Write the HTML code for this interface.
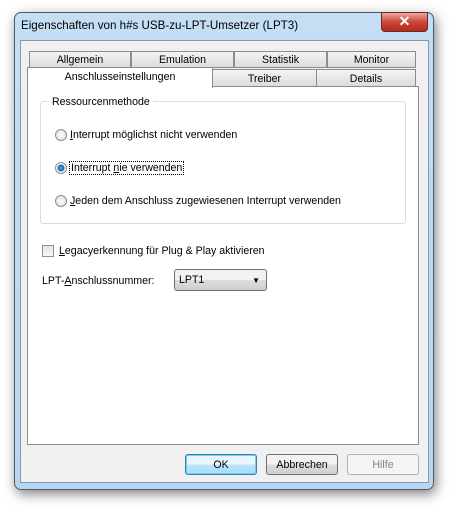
<!DOCTYPE html>
<html><head><style>
body{margin:0;width:453px;height:510px;background:#fff;position:relative;overflow:hidden;font-family:"Liberation Sans",sans-serif;font-size:10.6px;color:#000}
.a{position:absolute}
.win{left:14px;top:12px;width:420px;height:478px;border-radius:7px;background:linear-gradient(#c4def4,#b6d6f2);border:1px solid #4a5a6a;box-shadow:2px 4px 12px rgba(0,0,0,.5);box-sizing:border-box}
.cl{left:20px;top:40px;width:409px;height:443px;background:#f0f0f0;border:1px solid #8a98a8;box-sizing:border-box}
.tab{position:absolute;height:17px;background:linear-gradient(#f4f4f4,#dcdcdc);border:1px solid #898c95;box-sizing:border-box;text-align:center;line-height:17px}
.btn{position:absolute;top:454px;width:72px;height:21px;border:1px solid #707070;border-radius:3px;box-sizing:border-box;background:linear-gradient(#f2f2f2 50%,#dddddd 50%,#cfcfcf);text-align:center;line-height:20px}
.rad{position:absolute;left:55px;width:12px;height:12px;border-radius:50%;border:1px solid #8e8f8f;box-sizing:border-box;background:radial-gradient(#fff,#d8d8d8)}
</style></head><body>
<div class="a win"></div>
<div class="a" style="left:21px;top:19px;font-size:11.6px;color:#000">Eigenschaften von h#s USB-zu-LPT-Umsetzer (LPT3)</div>
<div class="a" style="left:381px;top:12px;width:47px;height:20px;border-radius:0 0 4px 4px;background:linear-gradient(#e9a99c,#c9483a 50%,#b52a1c);border:1px solid #6b2a20;box-sizing:border-box;color:#fff;font-weight:bold;text-align:center;line-height:17px;font-size:14px">✕</div>
<div class="a cl"></div>
<div class="tab" style="left:29px;top:51px;width:102px">Allgemein</div>
<div class="tab" style="left:131px;top:51px;width:103px">Emulation</div>
<div class="tab" style="left:234px;top:51px;width:93px">Statistik</div>
<div class="tab" style="left:327px;top:51px;width:89px">Monitor</div>
<div class="tab" style="left:212px;top:69px;width:105px;height:18px;line-height:19px">Treiber</div>
<div class="tab" style="left:316px;top:69px;width:100px;height:18px;line-height:19px">Details</div>
<div class="a" style="left:27px;top:86px;width:392px;height:359px;background:#fff;border:1px solid #898c95;box-sizing:border-box"></div>
<div class="a" style="left:27px;top:67px;width:186px;height:21px;background:#fff;border:1px solid #898c95;border-bottom:none;box-sizing:border-box;text-align:center;line-height:19px">Anschlusseinstellungen</div>
<div class="a" style="left:40px;top:101px;width:366px;height:123px;border:1px solid #d5dfe5;border-radius:3px;box-sizing:border-box"></div>
<div class="a" style="left:49px;top:96px;background:#fff;padding:0 3px">Ressourcenmethode</div>
<div class="rad" style="top:129px"></div>
<div class="a" style="left:70px;top:129px"><u>I</u>nterrupt möglichst nicht verwenden</div>
<div class="rad" style="top:162px;background:radial-gradient(#4ab0ec 0,#1a6aa8 3px,#fff 4px,#d8d8d8)"></div>
<div class="a" style="left:69px;top:161px;border:1px dotted #000;padding:0 1px">Interrupt <u>n</u>ie verwenden</div>
<div class="rad" style="top:195px"></div>
<div class="a" style="left:70px;top:195px"><u>J</u>eden dem Anschluss zugewiesenen Interrupt verwenden</div>
<div class="a" style="left:42px;top:245px;width:12px;height:12px;border:1px solid #8e8f8f;box-sizing:border-box;background:linear-gradient(#e4e4e4,#f6f6f6)"></div>
<div class="a" style="left:59px;top:245px"><u>L</u>egacyerkennung für Plug &amp; Play aktivieren</div>
<div class="a" style="left:42px;top:275px">LPT-<u>A</u>nschlussnummer:</div>
<div class="a" style="left:174px;top:269px;width:93px;height:22px;border:1px solid #707070;border-radius:3px;box-sizing:border-box;background:linear-gradient(#f2f2f2 50%,#dddddd 50%,#cfcfcf);padding-left:4px;line-height:21px">LPT1<span style="position:absolute;right:6px;top:0;font-size:8px">▼</span></div>
<div class="btn" style="left:185px;border-color:#3c7fb1;background:linear-gradient(#eaf6fd 50%,#bee6fd 50%,#a7d9f5);box-shadow:inset 0 0 0 1px #6fd0f6">OK</div>
<div class="btn" style="left:266px">Abbrechen</div>
<div class="btn" style="left:347px;background:#f4f4f4;border-color:#adb2b5;color:#838383">Hilfe</div>
</body></html>
